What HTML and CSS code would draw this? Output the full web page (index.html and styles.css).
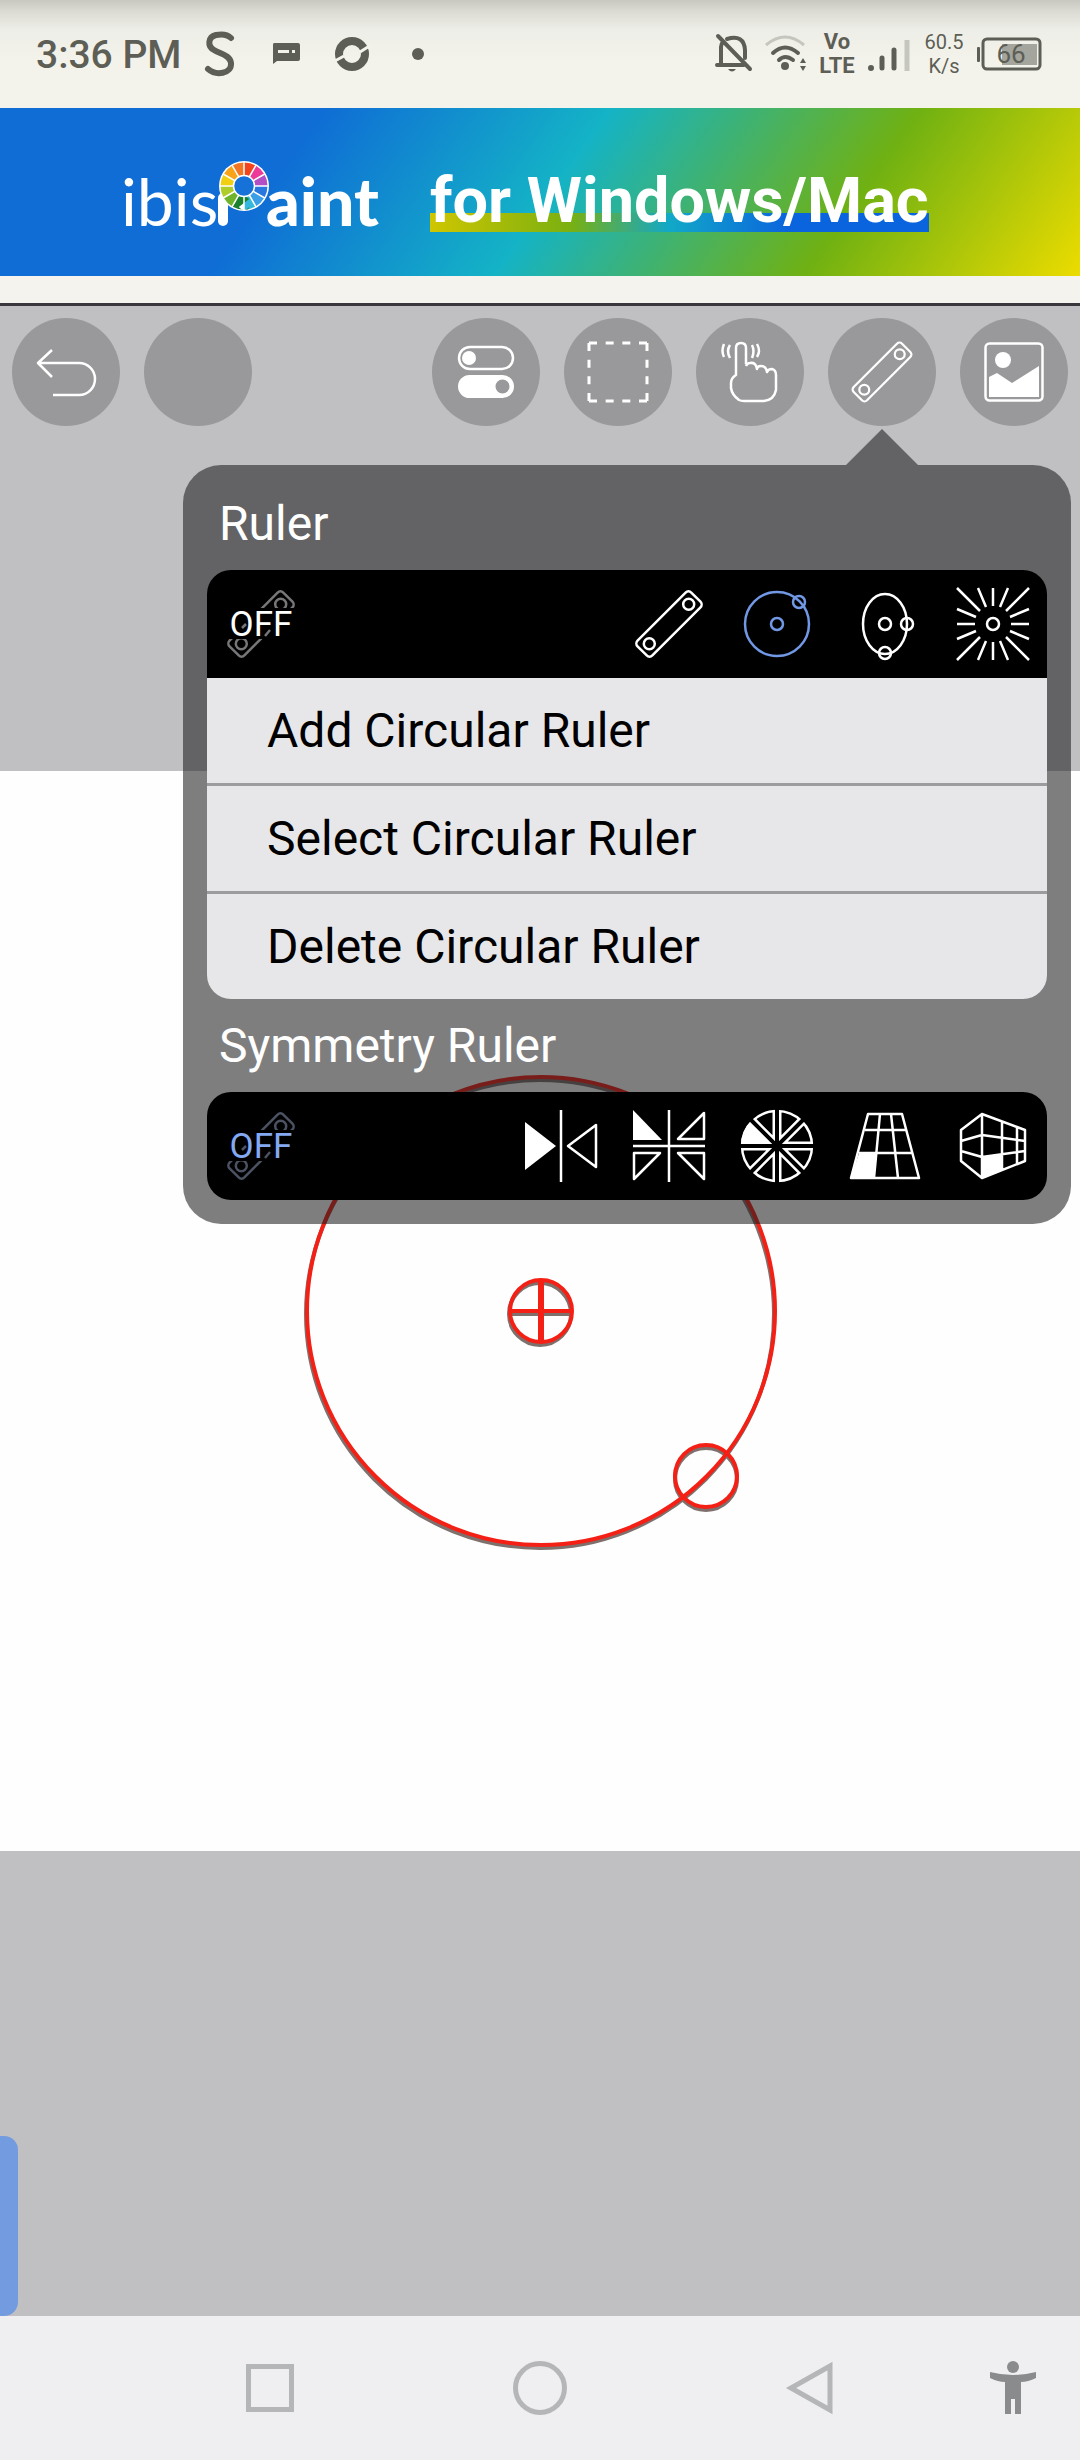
FILE: index.html
```
<!DOCTYPE html>
<html lang="en">

<head>
    <meta charset="UTF-8">
    <meta name="viewport" content="width=device-width, initial-scale=1.0">
    <title>ibisPaint</title>
    <link rel="stylesheet" href="styles.css">
</head>

<body>
    <!-- shared ruler shape -->
    <svg class="defs" width="0" height="0" aria-hidden="true">
        <defs>
            <g id="ruler-shape">
                <rect x="16" y="43.5" width="76" height="21" rx="4" transform="rotate(-45 54 54)" />
                <circle cx="73.7" cy="34.3" r="5.5" />
                <circle cx="34.3" cy="73.7" r="5.5" />
            </g>
        </defs>
    </svg>

    <header class="status-bar">
        <span class="time">3:36 PM</span>
        <div class="notifications">
            <svg width="66" height="66" viewBox="0 0 66 66">
                <path class="s-line" stroke-width="6" d="M44 17C40 13 34 13 29 14C21 16 20 25 27 29C33 33 43 34 44 42C45 53 29 55 21 48" />
            </svg>
            <svg width="66" height="66" viewBox="0 0 66 66">
                <path class="s-fill" fill-rule="evenodd" d="M21 22H45Q47 22 47 24V38Q47 40 45 40H24L20 43V24Q20 22 21 22ZM25 29V32H36V29ZM39 29V32H42V29Z" />
            </svg>
            <svg width="66" height="66" viewBox="0 0 66 66">
                <circle class="s-line" cx="33" cy="33" r="13" stroke-width="8" />
                <path class="gap-line" d="M14 41L25 35M41 31L52 24" />
            </svg>
            <svg width="66" height="66" viewBox="0 0 66 66">
                <circle class="s-fill" cx="33" cy="33" r="6" />
            </svg>
        </div>
        <div class="indicators">
            <svg width="36" height="40" viewBox="0 0 36 40">
                <path class="s-line" stroke-width="4" d="M5 30V13Q5 10 7 8M11 5Q28 0 29 16V24M1 31H28M2 2L34 35" />
                <path class="s-fill" d="M12 35H20Q16 40 12 35Z" />
            </svg>
            <svg width="42" height="40" viewBox="0 0 42 40">
                <path class="s-line pale" stroke-width="3" d="M2 11Q21 -5 40 11" />
                <path class="s-line" stroke-width="4" d="M9 19Q21 8 34 19M15 26Q21 20 29 26" />
                <circle class="s-fill" cx="21" cy="32" r="4" />
                <path class="s-fill" d="M36 29L39 24L42 29ZM36 32L39 37L42 32Z" />
            </svg>
            <span class="volte">Vo<br>LTE</span>
            <svg width="44" height="40" viewBox="0 0 44 40">
                <circle class="s-fill" cx="3" cy="34" r="3" />
                <path class="s-line" stroke-width="5" d="M14 24V34M26 16V34" />
                <path class="s-line pale" stroke-width="5" d="M39 6V37" />
            </svg>
            <span class="speed">60.5<br>K/s</span>
            <svg width="66" height="40" viewBox="0 0 66 40">
                <rect class="s-fill" x="1" y="13" width="3" height="15" rx="1" />
                <rect class="charge" x="26" y="10" width="35" height="21" />
                <rect class="s-line" x="7" y="5" width="57" height="30" rx="4" stroke-width="3" />
                <text class="charge-text" x="35" y="29">66</text>
            </svg>
        </div>
    </header>

    <a class="banner" href="#">
        <svg class="logo" width="260" height="66" viewBox="0 0 260 66">
            <text class="logo-thin" x="-3" y="58">ibis</text>
            <path class="stem" d="M99 30V53" />
            <text class="logo-bold" x="142" y="58">aint</text>
            <circle cx="120" cy="18" r="25" fill="#fff" />
            <g class="wheel">
                <circle pathLength="360" stroke="#f2441d" stroke-dasharray="30 330" />
                <circle pathLength="360" stroke="#ec3a98" stroke-dasharray="30 330" stroke-dashoffset="-30" />
                <circle pathLength="360" stroke="#b34fc4" stroke-dasharray="30 330" stroke-dashoffset="-60" />
                <circle pathLength="360" stroke="#2878e0" stroke-dasharray="30 330" stroke-dashoffset="-90" />
                <circle pathLength="360" stroke="#3a9fe6" stroke-dasharray="30 330" stroke-dashoffset="-120" />
                <circle pathLength="360" stroke="#35b8dd" stroke-dasharray="30 330" stroke-dashoffset="-150" />
                <circle pathLength="360" stroke="#18802f" stroke-dasharray="30 330" stroke-dashoffset="-180" />
                <circle pathLength="360" stroke="#6fb52c" stroke-dasharray="30 330" stroke-dashoffset="-210" />
                <circle pathLength="360" stroke="#b0cc28" stroke-dasharray="30 330" stroke-dashoffset="-240" />
                <circle pathLength="360" stroke="#f3cf12" stroke-dasharray="30 330" stroke-dashoffset="-270" />
                <circle pathLength="360" stroke="#f8a318" stroke-dasharray="30 330" stroke-dashoffset="-300" />
                <circle pathLength="360" stroke="#f47620" stroke-dasharray="30 330" stroke-dashoffset="-330" />
            </g>
            <path class="spokes" d="M120 -6V42M96 18H144M108 -2.8L132 38.8M99.2 6L140.8 30M99.2 30L140.8 6M108 38.8L132 -2.8" />
            <circle cx="120" cy="18" r="10.5" fill="#1672d8" stroke="#fff" stroke-width="1.5" />
        </svg>
        <span class="slogan">for Windows/Mac</span>
    </a>

    <main class="workspace">
        <div class="artboard">
            <svg class="guide" viewBox="0 0 1080 1080">
                <g class="guide-shadow">
                    <circle cx="540" cy="543" r="234" />
                    <circle cx="540" cy="543" r="31" />
                    <circle cx="706" cy="708" r="31" />
                    <path d="M509 543H571" />
                </g>
                <g class="guide-line">
                    <circle cx="541" cy="540" r="234" />
                    <circle cx="541" cy="540" r="31" />
                    <circle cx="706" cy="705" r="31" />
                    <path d="M510 540H572" />
                    <path d="M541 509V571" stroke-width="6" />
                </g>
            </svg>
        </div>

        <div class="toolbar">
            <button class="tool" aria-label="Undo">
                <svg viewBox="0 0 108 108"><path d="M40 32L26 45L40 59M26 45H67A16 16 0 0 1 67 77H41" /></svg>
            </button>
            <button class="tool" aria-label="Redo"></button>
            <span class="spacer"></span>
            <button class="tool" aria-label="Tool settings">
                <svg viewBox="0 0 108 108">
                    <rect x="27" y="29" width="54" height="22" rx="11" />
                    <circle class="solid" cx="37" cy="40" r="7" />
                    <path class="solid" fill-rule="evenodd" d="M37.500 57H70.500A11.500 11.500 0 0 1 70.500 80H37.500A11.500 11.500 0 0 1 37.500 57ZM70.500 61.500A7 7 0 0 0 70.500 75.500A7 7 0 0 0 70.500 61.500Z" />
                </svg>
            </button>
            <button class="tool" aria-label="Selection">
                <svg viewBox="0 0 108 108">
                    <path class="dash" d="M25 25H83M83 25V83M83 83H25M25 83V25" />
                </svg>
            </button>
            <button class="tool" aria-label="Gestures">
                <svg viewBox="0 0 108 108">
                    <path d="M50 46V30Q50 25 45 25Q40 25 40 30V57Q35 60 35 65V70Q36 77 43 82Q45 83 48 83H68Q78 82 80 72V57Q80 52 76 51Q72 51 71 54Q70 48 65 48Q61 48 61 51Q60 44 54 45Q51 45 50 48" />
                    <path d="M34 27Q30 33 34 40M28 26Q25 33 28 39M56 27Q59 33 56 40M61 26Q65 33 61 39" />
                </svg>
            </button>
            <button class="tool" aria-label="Ruler">
                <svg viewBox="0 0 108 108"><use href="#ruler-shape" transform="translate(5.400 5.400) scale(.9)" /></svg>
            </button>
            <button class="tool" aria-label="Import picture">
                <svg viewBox="0 0 108 108">
                    <rect x="25.500" y="25.500" width="57" height="57" rx="4" />
                    <circle class="solid" cx="43" cy="42" r="8" />
                    <path class="solid" d="M29 59L37 55L52 65L79 48V79H29Z" />
                </svg>
            </button>
        </div>

        <section class="popover">
            <h2 class="label">Ruler</h2>
            <div class="group">
                <div class="icon-row">
                    <button class="cell off" aria-label="Ruler off">
                        <svg viewBox="0 0 108 108">
                            <use class="faded" href="#ruler-shape" />
                            <rect class="cover" x="15" y="38" width="78" height="31" />
                            <path class="faded" d="M35 58L39 54M58 66L63 60" />
                            <text x="54" y="66">OFF</text>
                        </svg>
                    </button>
                    <span class="spacer"></span>
                    <button class="cell" aria-label="Straight ruler">
                        <svg viewBox="0 0 108 108"><use href="#ruler-shape" /></svg>
                    </button>
                    <button class="cell active" aria-label="Circular ruler">
                        <svg viewBox="0 0 108 108">
                            <circle cx="54" cy="54" r="32" />
                            <circle cx="54" cy="54" r="6" />
                            <circle cx="76" cy="32" r="6" />
                        </svg>
                    </button>
                    <button class="cell" aria-label="Elliptical ruler">
                        <svg viewBox="0 0 108 108">
                            <ellipse cx="54" cy="54" rx="22" ry="30" />
                            <circle cx="54" cy="54" r="6" />
                            <circle cx="76" cy="54" r="6" />
                            <circle cx="54" cy="83" r="6" />
                        </svg>
                    </button>
                    <button class="cell" aria-label="Radial ruler">
                        <svg viewBox="0 0 108 108">
                            <circle cx="54" cy="54" r="6" />
                            <path d="M54 18V36M54 72V90M18 54H36M72 54H90M18 18L41 41M90 18L67 41M18 90L41 67M90 90L67 67M39 18L47 37M69 18L61 37M39 90L47 71M69 90L61 71M18 39L37 47M18 69L37 61M90 39L71 47M90 69L71 61" />
                        </svg>
                    </button>
                </div>
                <button class="menu-item">Add Circular Ruler</button>
                <button class="menu-item">Select Circular Ruler</button>
                <button class="menu-item">Delete Circular Ruler</button>
            </div>

            <h2 class="label">Symmetry Ruler</h2>
            <div class="group">
                <div class="icon-row">
                    <button class="cell off active" aria-label="Symmetry ruler off">
                        <svg viewBox="0 0 108 108">
                            <use class="faded" href="#ruler-shape" />
                            <rect class="cover" x="15" y="38" width="78" height="31" />
                            <path class="faded" d="M35 58L39 54M58 66L63 60" />
                            <text x="54" y="66">OFF</text>
                        </svg>
                    </button>
                    <span class="spacer"></span>
                    <button class="cell" aria-label="Mirror">
                        <svg viewBox="0 0 108 108">
                            <path d="M54 18V90M89 33V75L61 54Z" />
                            <path class="solid" d="M18 30V78L49 54Z" />
                        </svg>
                    </button>
                    <button class="cell" aria-label="Four-way mirror">
                        <svg viewBox="0 0 108 108">
                            <path d="M54 18V90M18 54H90M89 21V47H63ZM19 87V61H45ZM89 87V61H63Z" />
                            <path class="solid" d="M18 18V48H47Z" />
                        </svg>
                    </button>
                    <button class="cell" aria-label="Kaleidoscope">
                        <svg viewBox="0 0 108 108">
                            <path class="solid" d="M54 54H18A36 36 0 0 1 28.500 28.500Z" />
                            <circle cx="54" cy="54" r="35" />
                            <path class="pie-line" d="M54 19V89M19 54H89M29.300 29.300L78.700 78.700M78.700 29.300L29.300 78.700" />
                            <path class="pie-gap" d="M54 16V92M16 54H92M27 27L81 81M81 27L27 81" />
                        </svg>
                    </button>
                    <button class="cell" aria-label="Perspective array">
                        <svg viewBox="0 0 108 108">
                            <path d="M37 22H71L88 86H20ZM34 38H76M28 61H82M49 22L43 86M60 22L67 86" />
                            <path class="solid" d="M28 61H45L43 86H20Z" />
                        </svg>
                    </button>
                    <button class="cell" aria-label="Perspective box">
                        <svg viewBox="0 0 108 108">
                            <path d="M43 22L22 38V69L43 86L86 69V38ZM43 22V86M22 49L43 43L86 49M22 59L43 65L86 59M63 30V78M78 35V72" />
                            <path class="solid" d="M43 65L63 62V78L43 86Z" />
                        </svg>
                    </button>
                </div>
            </div>
        </section>

        <button class="side-handle" aria-label="Open side panel"></button>
    </main>

    <nav class="nav-bar">
        <button class="nav-button" aria-label="Recent apps">
            <svg width="60" height="60" viewBox="0 0 60 60"><rect x="8.500" y="8.500" width="43" height="43" /></svg>
        </button>
        <button class="nav-button" aria-label="Home">
            <svg width="60" height="60" viewBox="0 0 60 60"><circle cx="30" cy="30" r="24.500" /></svg>
        </button>
        <button class="nav-button" aria-label="Back">
            <svg width="60" height="60" viewBox="0 0 60 60"><path d="M50 8V52L11 30Z" /></svg>
        </button>
        <button class="nav-button" aria-label="Accessibility">
            <svg width="60" height="60" viewBox="0 0 60 60">
                <path class="person" d="M7 14Q30 20 53 14V20Q45 24 38 24V56H32V41H28V56H22V24Q15 24 7 20Z" />
                <circle class="person" cx="30" cy="9" r="6" />
            </svg>
        </button>
    </nav>
</body>

</html>
```
FILE: styles.css
```
* {
    box-sizing: border-box;
}

body {
    margin: 0;
    min-height: 100vh;
    display: flex;
    flex-direction: column;
    background-color: #f5f3ee;
    font-family: Roboto, "Noto Sans", sans-serif;
}

button {
    margin: 0;
    padding: 0;
    border: none;
    background: none;
    font-family: inherit;
    cursor: pointer;
}

svg {
    display: block;
    overflow: visible;
}

.defs {
    position: absolute;
}

.spacer {
    flex: 1;
}

/* status bar */
.status-bar {
    height: 108px;
    padding: 0 38px 0 36px;
    display: flex;
    align-items: center;
    background: linear-gradient(#c8c8c0, #dcdcd5 12px, #eeeee8 30px, #f3f3eb 60px);
    color: #5d5e55;
}

.time {
    font-size: 39px;
    font-weight: 500;
    line-height: 48px;
    padding-top: 2px;
}

.notifications {
    flex: 1;
    display: flex;
    margin-left: 6px;
}

.indicators {
    display: flex;
    align-items: center;
    gap: 12px;
}

.s-line {
    fill: none;
    stroke: #5d5e55;
    stroke-linecap: round;
    stroke-linejoin: round;
}

.s-fill {
    fill: #5d5e55;
}

.pale {
    stroke: #c5c6be;
    stroke-linecap: butt;
}

.gap-line {
    stroke: #f3f3eb;
    stroke-width: 3;
}

.volte {
    width: 38px;
    font-size: 22px;
    font-weight: 700;
    line-height: 24px;
    text-align: center;
}

.speed {
    width: 40px;
    font-size: 20px;
    line-height: 24px;
    text-align: center;
}

.charge {
    fill: #a4a59d;
}

.charge-text {
    fill: #5d5e55;
    font-size: 26px;
    text-anchor: middle;
}

/* banner */
.banner {
    height: 168px;
    padding: 18px 0 0 124px;
    display: flex;
    align-items: center;
    gap: 46px;
    background: linear-gradient(125deg, #0f6dd5 27%, #14b3c6 51%, #70b112 77%, #ecdc00 100%);
    color: #ffffff;
    text-decoration: none;
}

.logo text {
    fill: #ffffff;
    font-family: Lato, sans-serif;
}

.logo .logo-thin {
    font-size: 66px;
    font-weight: 400;
}

.logo .logo-bold {
    font-size: 66px;
    font-weight: 900;
}

.stem {
    stroke: #ffffff;
    stroke-width: 10;
    stroke-linecap: round;
}

.wheel circle {
    cx: 120px;
    cy: 18px;
    r: 17px;
    fill: none;
    stroke-width: 13;
    transform: rotate(-90deg);
    transform-origin: 120px 18px;
}

.spokes {
    stroke: #ffffff;
    stroke-width: 1.5;
}

.slogan {
    font-size: 63px;
    font-weight: 700;
    line-height: 76px;
    background: linear-gradient(90deg, #cfc600, #7ab010 28%, #12a8c8 48%, #0a64dd 72%) 0 50px / 100% 19px no-repeat;
}

/* drawing area */
.workspace {
    flex: 1;
    margin-top: 27px;
    border-top: 3px solid #39373b;
    display: flex;
    align-items: center;
    position: relative;
    background-color: #c0c0c2;
}

.artboard {
    width: 100%;
    aspect-ratio: 1;
    background-color: #fefefe;
}

.guide {
    width: 100%;
    fill: none;
    stroke-width: 4;
}

.guide-shadow {
    stroke: #7d706d;
}

.guide-line {
    stroke: #f42015;
}

.toolbar {
    position: absolute;
    top: 12px;
    left: 12px;
    right: 12px;
    display: flex;
    gap: 24px;
}

.toolbar .spacer {
    margin-right: -24px;
}

.tool {
    width: 108px;
    height: 108px;
    border-radius: 50%;
    background-color: #99999b;
}

.tool svg,
.cell svg {
    width: 108px;
    height: 108px;
    fill: none;
    stroke: #ffffff;
    stroke-width: 2.5;
    stroke-linejoin: round;
}

.tool .solid,
.cell .solid {
    fill: #ffffff;
    stroke: none;
}

.tool .dash {
    stroke-width: 3;
    stroke-dasharray: 8 8.67;
}

/* ruler menu */
.popover {
    position: absolute;
    top: 159px;
    right: 9px;
    width: 888px;
    max-width: calc(100% - 18px);
    padding: 12px 24px 24px;
    border-radius: 38px;
    background-color: rgba(29, 29, 30, 0.57);
}

.popover::before {
    content: "";
    position: absolute;
    right: 153px;
    bottom: 100%;
    width: 72px;
    height: 36px;
    background-color: rgba(29, 29, 30, 0.57);
    clip-path: polygon(50% 0, 100% 100%, 0 100%);
}

.label {
    margin: 0;
    padding-left: 12px;
    color: #ffffff;
    font-size: 48px;
    font-weight: 400;
    line-height: 93px;
}

.group {
    border-radius: 24px;
    overflow: hidden;
}

.icon-row {
    display: flex;
    background-color: #000000;
}

.cell {
    width: 108px;
    height: 108px;
}

.cell.active svg {
    stroke: #7198e4;
}

.cell text {
    fill: #ffffff;
    stroke: none;
    font-size: 35px;
    text-anchor: middle;
}

.cell.active text {
    fill: #83a9f2;
}

.cell .faded {
    stroke: #77777a;
}

.cell.active .faded {
    stroke: #4b5261;
}

.cell .cover {
    fill: #000000;
    stroke: none;
}

.cell .pie-line {
    stroke-width: 9;
}

.cell .pie-gap {
    stroke: #000000;
    stroke-width: 4;
}

.menu-item {
    display: block;
    width: 100%;
    padding-left: 60px;
    background-color: #e7e7e9;
    color: #000000;
    font-size: 48px;
    line-height: 105px;
    text-align: left;
}

.menu-item + .menu-item {
    border-top: 3px solid #9c9c9e;
}

.side-handle {
    position: absolute;
    left: 0;
    bottom: 0;
    width: 18px;
    height: 180px;
    border-radius: 0 14px 14px 0;
    background-color: #739be0;
}

/* system navigation */
.nav-bar {
    height: 144px;
    display: grid;
    grid-template-columns: 2fr 2fr 2fr 1fr;
    padding-left: 12.5%;
    background-color: #efeff1;
}

.nav-button {
    display: flex;
    align-items: center;
    justify-content: center;
}

.nav-button svg {
    fill: none;
    stroke: #b5b6b8;
    stroke-width: 5;
}

.nav-button .person {
    fill: #8a8b8d;
    stroke: none;
}
```
